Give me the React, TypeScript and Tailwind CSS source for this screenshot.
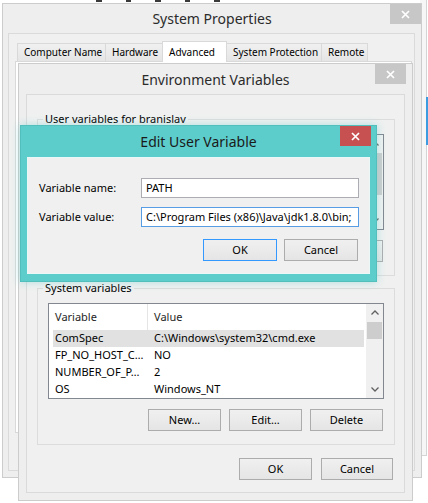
import React from 'react';

type Row = { name: string; value: string; selected?: boolean };

const systemRows: Row[] = [
  { name: 'ComSpec', value: 'C:\\Windows\\system32\\cmd.exe', selected: true },
  { name: 'FP_NO_HOST_C…', value: 'NO' },
  { name: 'NUMBER_OF_P…', value: '2' },
  { name: 'OS', value: 'Windows_NT' },
];

function CloseButton({ active }: { active?: boolean }) {
  return (
    <div
      className={`flex h-[20px] w-[31px] items-center justify-center ${
        active ? 'bg-[#c75050]' : 'bg-[#c7c7c7]'
      }`}
    >
      <svg width="9" height="9" viewBox="0 0 9 9">
        <path d="M1 1L8 8M8 1L1 8" stroke="white" strokeWidth="1.7" />
      </svg>
    </div>
  );
}

function Button({
  children,
  className = 'w-[73px]',
  isDefault,
}: {
  children?: React.ReactNode;
  className?: string;
  isDefault?: boolean;
}) {
  return (
    <div
      className={`flex h-[22px] items-center justify-center border bg-linear-to-b from-[#f0f0f0] to-[#e5e5e5] text-[11px] text-black ${
        isDefault ? 'border-[#3399ff]' : 'border-[#acacac]'
      } ${className}`}
    >
      {children}
    </div>
  );
}

function Chevron({ up }: { up?: boolean }) {
  return (
    <svg width="8" height="5" viewBox="0 0 8 5">
      <path
        d={up ? 'M0.5 4.5L4 1L7.5 4.5' : 'M0.5 0.5L4 4L7.5 0.5'}
        fill="none"
        stroke="#606060"
        strokeWidth="1.3"
      />
    </svg>
  );
}

// the user list sits under the edit dialog, so it is drawn without its texts
function VarList({ rows, thumbClass, showHeader }: { rows: Row[]; thumbClass: string; showHeader: boolean }) {
  return (
    <div className="flex h-[96px] w-[336px] border border-[#828790] bg-white">
      <div className="flex-1 overflow-hidden">
        <div className="flex h-[26px] items-center text-[11px] text-[#1e1e1e]">
          <div className="flex h-full w-[99px] items-center border-r border-[#e5e5e5] pl-[6px]">
            {showHeader && 'Variable'}
          </div>
          <div className="pl-[6px]">{showHeader && 'Value'}</div>
        </div>
        {rows.map((r) => (
          <div
            key={r.name}
            className={`ml-[4px] mr-[2px] flex h-[17px] items-center text-[11px] text-black ${
              r.selected ? 'bg-[#e1e1e1]' : ''
            }`}
          >
            <div className="w-[101px] shrink-0 whitespace-nowrap pl-[2px]">{r.name}</div>
            <div className="whitespace-nowrap">{r.value}</div>
          </div>
        ))}
      </div>
      <div className="flex w-[17px] flex-col items-center bg-[#f0f0f0]">
        <div className="flex h-[17px] items-center justify-center">
          <Chevron up />
        </div>
        <div className={`w-[15px] bg-[#cdcdcd] ${thumbClass}`} />
        <div className="flex-1" />
        <div className="flex h-[17px] items-center justify-center">
          <Chevron />
        </div>
      </div>
    </div>
  );
}

function VarGroup({
  title,
  rows,
  thumbClass,
  className,
  hidden,
}: {
  title: string;
  rows: Row[];
  thumbClass: string;
  className: string;
  hidden?: boolean;
}) {
  return (
    <fieldset className={`ml-[10px] w-[358px] border border-[#dcdcdc] pb-[13px] ${className}`}>
      <legend className="ml-[5px] px-[2px] text-[11px] leading-[16px] text-black">{title}</legend>
      <div className="ml-[10px] mt-[7px]">
        <VarList rows={rows} thumbClass={thumbClass} showHeader={!hidden} />
      </div>
      <div className="mt-[10px] flex justify-end gap-[8px] pr-[11px]">
        <Button>{!hidden && 'New…'}</Button>
        <Button>{!hidden && 'Edit…'}</Button>
        <Button>{!hidden && 'Delete'}</Button>
      </div>
    </fieldset>
  );
}

const tabs = [
  { label: 'Computer Name', w: 'w-[89px]' },
  { label: 'Hardware', w: 'w-[58px] -ml-px' },
  { label: 'Advanced', w: 'w-[65px] -ml-px', active: true },
  { label: 'System Protection', w: 'w-[96px] -ml-px' },
  { label: 'Remote', w: 'w-[47px] -ml-px' },
];

export default function App() {
  return (
    <div className="relative h-[503px] w-[428px] overflow-hidden bg-white font-['Noto_Sans',sans-serif]">
      {/* edge of whatever sits behind */}
      <div className="absolute left-0 top-0 flex h-[3px] w-[300px] items-start gap-[24px] pl-[96px]">
        <div className="h-[2px] w-[6px] bg-[#3a3a3a]" />
        <div className="h-[2px] w-[5px] bg-[#3a3a3a]" />
        <div className="h-[2px] w-[6px] bg-[#3a3a3a]" />
        <div className="h-[2px] w-[5px] bg-[#3a3a3a]" />
        <div className="h-[2px] w-[6px] bg-[#3a3a3a]" />
      </div>
      <div className="absolute left-[420px] top-0 h-[456px] w-[7px] border-b border-r border-[#d4d4d4] bg-[#f6f6f6]" />
      <div className="absolute left-[426px] top-[97px] h-[48px] w-[2px] bg-[#3d9be0]" />

      {/* System Properties */}
      <div className="absolute left-[2px] top-[3px] h-[475px] w-[420px] border border-[#cccccc] bg-[#eeeeee]">
        <div className="flex h-[29px] items-center justify-center text-[14px] text-[#2b2b2b]">
          System Properties
        </div>
        <div className="absolute right-0 top-0">
          <CloseButton />
        </div>
        <div className="ml-[5px] h-[438px] w-[407px] border border-[#dadada] bg-[#f0f0f0]">
          <div className="relative z-10 ml-[8px] mt-[7px] flex items-end">
            {tabs.map((t) =>
              t.active ? (
                <div
                  key={t.label}
                  className={`relative z-10 flex h-[21px] items-start whitespace-nowrap border-l border-r border-t border-[#d9d9d9] bg-white pl-[6px] pt-[3px] text-[10px] text-black ${t.w}`}
                >
                  {t.label}
                </div>
              ) : (
                <div
                  key={t.label}
                  className={`flex h-[19px] items-center overflow-hidden whitespace-nowrap border border-[#d9d9d9] bg-linear-to-b from-[#f0f0f0] to-[#e5e5e5] pl-[6px] text-[10px] text-black ${t.w}`}
                >
                  {t.label}
                </div>
              ),
            )}
          </div>
          <div className="-mt-px ml-[6px] h-[372px] w-[397px] border border-[#d9d9d9] bg-white" />
        </div>
      </div>

      {/* Environment Variables */}
      <div className="absolute left-[18px] top-[63px] h-[438px] w-[395px] border border-[#cccccc] bg-[#eeeeee]">
        <div className="flex h-[30px] items-center justify-center text-[14px] text-[#2b2b2b]">
          Environment Variables
        </div>
        <div className="absolute right-[6px] top-0">
          <CloseButton />
        </div>
        <div className="mx-[7px] h-[399px] w-[379px] border border-[#dadada] bg-[#f0f0f0]">
          <VarGroup
            title="User variables for branislav"
            rows={[]}
            thumbClass="mt-[1px] h-[42px]"
            className="mt-[16px]"
            hidden
          />
          <VarGroup
            title="System variables"
            rows={systemRows}
            thumbClass="mt-[1px] h-[17px]"
            className="mt-[4px]"
          />
          <div className="mt-[13px] flex justify-end gap-[9px] pr-[11px]">
            <Button>OK</Button>
            <Button className="w-[72px]">Cancel</Button>
          </div>
        </div>
      </div>

      {/* Edit User Variable */}
      <div className="absolute left-[20px] top-[125px] h-[157px] w-[357px] border border-[#52bfbc] bg-[#5dcdcb] shadow-[0_0_8px_rgba(93,205,203,0.45)]">
        <div className="flex h-[31px] items-center justify-center text-[14px] text-[#1a1a1a]">
          Edit User Variable
        </div>
        <div className="absolute right-[5px] top-0">
          <CloseButton active />
        </div>
        <div className="ml-[6px] h-[117px] w-[343px] border border-[#eaf7f7] bg-[#f0f0f0]">
          <div className="grid grid-cols-[102px_218px] items-center gap-y-[9px] pl-[11px] pt-[20px] text-[11px] text-black">
            <div>Variable name:</div>
            <div className="flex h-[20px] items-center border border-[#abadb3] bg-white pl-[4px]">PATH</div>
            <div>Variable value:</div>
            <div className="flex h-[20px] items-center whitespace-nowrap border border-[#569de5] bg-white pl-[4px]">
              C:\Program Files (x86)\Java\jdk1.8.0\bin;
            </div>
          </div>
          <div className="mt-[12px] flex justify-end gap-[7px] pr-[11px]">
            <Button isDefault className="w-[74px]">
              OK
            </Button>
            <Button className="w-[74px]">Cancel</Button>
          </div>
        </div>
      </div>
    </div>
  );
}
